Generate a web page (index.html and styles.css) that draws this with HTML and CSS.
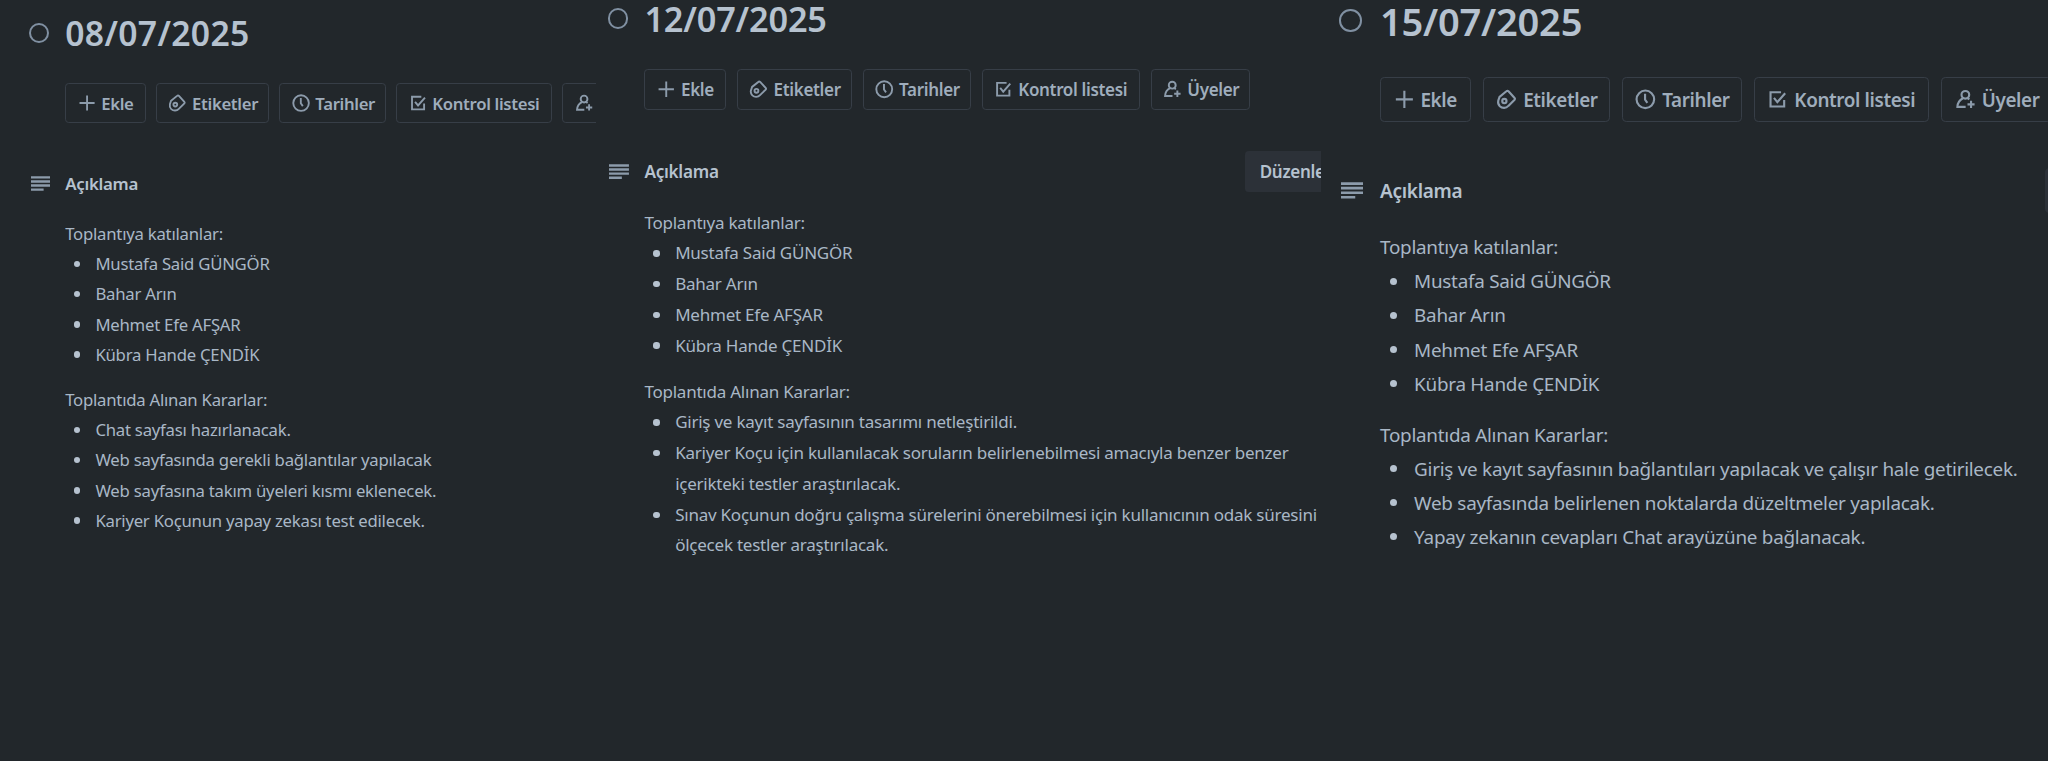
FILE: index.html
```html
<!DOCTYPE html>
<html lang="tr">
<head>
<meta charset="utf-8">
<title>Toplantı Notları</title>
<link rel="stylesheet" href="styles.css">
</head>
<body>
<svg class="defs" aria-hidden="true">
  <symbol id="plus" viewBox="0 0 16 16"><path d="M8 2v12M2 8h12"/></symbol>
  <symbol id="tag" viewBox="0 0 16 16"><path d="M9.500 2.300 13.800 7a1 1 0 0 1 0 1.300l-4.400 4.300a4.200 4.200 0 0 1-6 .2 4.200 4.200 0 0 1-1.100-3.900L3.200 6.200 8 2.300a1.100 1.100 0 0 1 1.500 0Z"/><circle cx="6.600" cy="9.200" r="1.500"/></symbol>
  <symbol id="clock" viewBox="0 0 16 16"><circle cx="8" cy="8" r="6.2"/><path d="M7.800 4v4.200l1.600 2.200"/></symbol>
  <symbol id="check" viewBox="0 0 16 16"><path d="M10.600 3H3.200v10h9.600V8.400M5.600 7l2.400 2.900 5.500-6.200"/></symbol>
  <symbol id="member" viewBox="0 0 16 16"><circle cx="8" cy="4.800" r="2.700"/><path d="M6.300 7.200C4 8.400 2.500 10.500 2.400 13.300H8.200M9.600 7.100l1.200.9M12 9v5M9.500 11.500h5"/></symbol>
  <symbol id="lines" viewBox="0 0 16 12"><path d="M0 1h16M0 4.300h16M0 7.600h16M0 10.900h10.300"/></symbol>
</svg>
<main class="board">
  <section class="card card-first">
    <header class="title-row"><span class="ring"></span><h1>08/07/2025</h1></header>
    <nav class="actions">
      <button class="btn add"><svg><use href="#plus"/></svg>Ekle</button>
      <button class="btn tags"><svg><use href="#tag"/></svg>Etiketler</button>
      <button class="btn dates"><svg><use href="#clock"/></svg>Tarihler</button>
      <button class="btn list"><svg><use href="#check"/></svg>Kontrol listesi</button>
      <button class="btn members" aria-label="Üyeler"><svg><use href="#member"/></svg></button>
    </nav>
    <div class="section-head"><svg class="lines"><use href="#lines"/></svg><h2>Açıklama</h2></div>
    <div class="notes">
      <p>Toplantıya katılanlar:</p>
      <ul>
        <li>Mustafa Said GÜNGÖR</li>
        <li>Bahar Arın</li>
        <li>Mehmet Efe AFŞAR</li>
        <li>Kübra Hande ÇENDİK</li>
      </ul>
      <p>Toplantıda Alınan Kararlar:</p>
      <ul>
        <li>Chat sayfası hazırlanacak.</li>
        <li>Web sayfasında gerekli bağlantılar yapılacak</li>
        <li>Web sayfasına takım üyeleri kısmı eklenecek.</li>
        <li>Kariyer Koçunun yapay zekası test edilecek.</li>
      </ul>
    </div>
  </section>
  <section class="card card-second">
    <header class="title-row"><span class="ring"></span><h1>12/07/2025</h1></header>
    <nav class="actions">
      <button class="btn add"><svg><use href="#plus"/></svg>Ekle</button>
      <button class="btn tags"><svg><use href="#tag"/></svg>Etiketler</button>
      <button class="btn dates"><svg><use href="#clock"/></svg>Tarihler</button>
      <button class="btn list"><svg><use href="#check"/></svg>Kontrol listesi</button>
      <button class="btn members"><svg><use href="#member"/></svg>Üyeler</button>
    </nav>
    <div class="section-head"><svg class="lines"><use href="#lines"/></svg><h2>Açıklama</h2><button class="edit">Düzenle</button></div>
    <div class="notes">
      <p>Toplantıya katılanlar:</p>
      <ul>
        <li>Mustafa Said GÜNGÖR</li>
        <li>Bahar Arın</li>
        <li>Mehmet Efe AFŞAR</li>
        <li>Kübra Hande ÇENDİK</li>
      </ul>
      <p>Toplantıda Alınan Kararlar:</p>
      <ul>
        <li>Giriş ve kayıt sayfasının tasarımı netleştirildi.</li>
        <li>Kariyer Koçu için kullanılacak soruların belirlenebilmesi amacıyla benzer benzer<br>içerikteki testler araştırılacak.</li>
        <li>Sınav Koçunun doğru çalışma sürelerini önerebilmesi için kullanıcının odak süresini<br>ölçecek testler araştırılacak.</li>
      </ul>
    </div>
  </section>
  <section class="card card-third">
    <header class="title-row"><span class="ring"></span><h1>15/07/2025</h1></header>
    <nav class="actions">
      <button class="btn add"><svg><use href="#plus"/></svg>Ekle</button>
      <button class="btn tags"><svg><use href="#tag"/></svg>Etiketler</button>
      <button class="btn dates"><svg><use href="#clock"/></svg>Tarihler</button>
      <button class="btn list"><svg><use href="#check"/></svg>Kontrol listesi</button>
      <button class="btn members"><svg><use href="#member"/></svg>Üyeler</button>
    </nav>
    <div class="section-head"><svg class="lines"><use href="#lines"/></svg><h2>Açıklama</h2><button class="edit" aria-label="Düzenle"></button></div>
    <div class="notes">
      <p>Toplantıya katılanlar:</p>
      <ul>
        <li>Mustafa Said GÜNGÖR</li>
        <li>Bahar Arın</li>
        <li>Mehmet Efe AFŞAR</li>
        <li>Kübra Hande ÇENDİK</li>
      </ul>
      <p>Toplantıda Alınan Kararlar:</p>
      <ul>
        <li>Giriş ve kayıt sayfasının bağlantıları yapılacak ve çalışır hale getirilecek.</li>
        <li>Web sayfasında belirlenen noktalarda düzeltmeler yapılacak.</li>
        <li>Yapay zekanın cevapları Chat arayüzüne bağlanacak.</li>
      </ul>
    </div>
  </section>
</main>
</body>
</html>
```

FILE: styles.css
```css
* { box-sizing: border-box; }

body {
  margin: 0;
  background: #22272b;
  color: #a9b7c6;
  font-family: "Noto Sans", "Open Sans", sans-serif;
  overflow: hidden;
}

h1, h2, p, ul { margin: 0; padding: 0; }

.defs { display: none; }

.board {
  display: grid;
  grid-template-columns: 596px 725px 727px;
  height: 761px;
}

/* --u is the card's zoom factor: one design pixel */
.card {
  overflow-x: clip;
  white-space: nowrap;
}

.card-first { --u: 1.258px; padding: 16.4px 0 0 65.2px; }
.card-second { --u: 1.281px; padding: 1.2px 0 0 48.4px; }
.card-third { --u: 1.42px; padding: 1.6px 0 0 59px; }

.title-row {
  display: flex;
  align-items: center;
  height: calc(28 * var(--u));
  margin: 0 0 calc(25.1 * var(--u)) calc(-28.8 * var(--u));
}

.ring {
  flex: none;
  width: calc(16 * var(--u));
  height: calc(16 * var(--u));
  margin: 0 calc(12.8 * var(--u)) calc(1.2 * var(--u)) 0;
  border: 2px solid #8090a2;
  border-radius: 50%;
}

h1 {
  color: #b6c2cf;
  font-size: calc(26.8 * var(--u));
  font-weight: 600;
  line-height: calc(27 * var(--u));
  letter-spacing: 0.01em;
}

.card-second h1, .card-third h1 { letter-spacing: -0.006em; }

.actions {
  display: flex;
  gap: calc(8.3 * var(--u));
}

button {
  font: inherit;
  font-size: calc(13.3 * var(--u));
  font-weight: 600;
  letter-spacing: -0.02em;
  white-space: nowrap;
}

.btn {
  flex: none;
  display: flex;
  align-items: center;
  gap: calc(3.6 * var(--u));
  height: calc(32 * var(--u));
  padding: 0 0 0 calc(8.2 * var(--u));
  color: #9fadbc;
  background: transparent;
  border: calc(1 * var(--u)) solid #373e47;
  border-radius: calc(3 * var(--u));
}

.btn svg {
  flex: none;
  width: calc(16 * var(--u));
  height: calc(16 * var(--u));
  fill: none;
  stroke: #8c9bab;
  stroke-width: 1.5;
}

.add { width: calc(64 * var(--u)); }
.tags { width: calc(89.7 * var(--u)); }
.dates { width: calc(84.7 * var(--u)); }
.list { width: calc(123.7 * var(--u)); }
.members { width: calc(77.7 * var(--u)); }

.section-head {
  display: flex;
  align-items: center;
  height: calc(32 * var(--u));
  margin: calc(32 * var(--u)) 0 calc(12 * var(--u)) calc(-27.4 * var(--u));
}

.lines {
  flex: none;
  width: calc(15.6 * var(--u));
  height: calc(12 * var(--u));
  margin-right: calc(11.8 * var(--u));
  fill: none;
  stroke: #8c9bab;
  stroke-width: 1.9;
}

h2 {
  flex: none;
  width: calc(468.6 * var(--u));
  color: #b6c2cf;
  font-size: calc(13.4 * var(--u));
  font-weight: 600;
  letter-spacing: -0.016em;
}

.edit {
  flex: none;
  width: calc(74 * var(--u));
  height: calc(32 * var(--u));
  padding: 0 calc(11.8 * var(--u));
  color: #b6c2cf;
  background: #2c3138;
  border: 0;
  border-radius: calc(3 * var(--u));
}

.notes {
  font-size: calc(13.3 * var(--u));
  line-height: calc(24 * var(--u));
  letter-spacing: -0.014em;
}

.notes ul {
  list-style: none;
  margin-bottom: calc(12 * var(--u));
  padding-left: calc(24 * var(--u));
}

.notes li::before {
  content: "";
  float: left;
  width: calc(5 * var(--u));
  height: calc(5 * var(--u));
  margin: calc(9.3 * var(--u)) 0 0 calc(-17 * var(--u));
  border-radius: 50%;
  background: #b6c2cf;
}
```
